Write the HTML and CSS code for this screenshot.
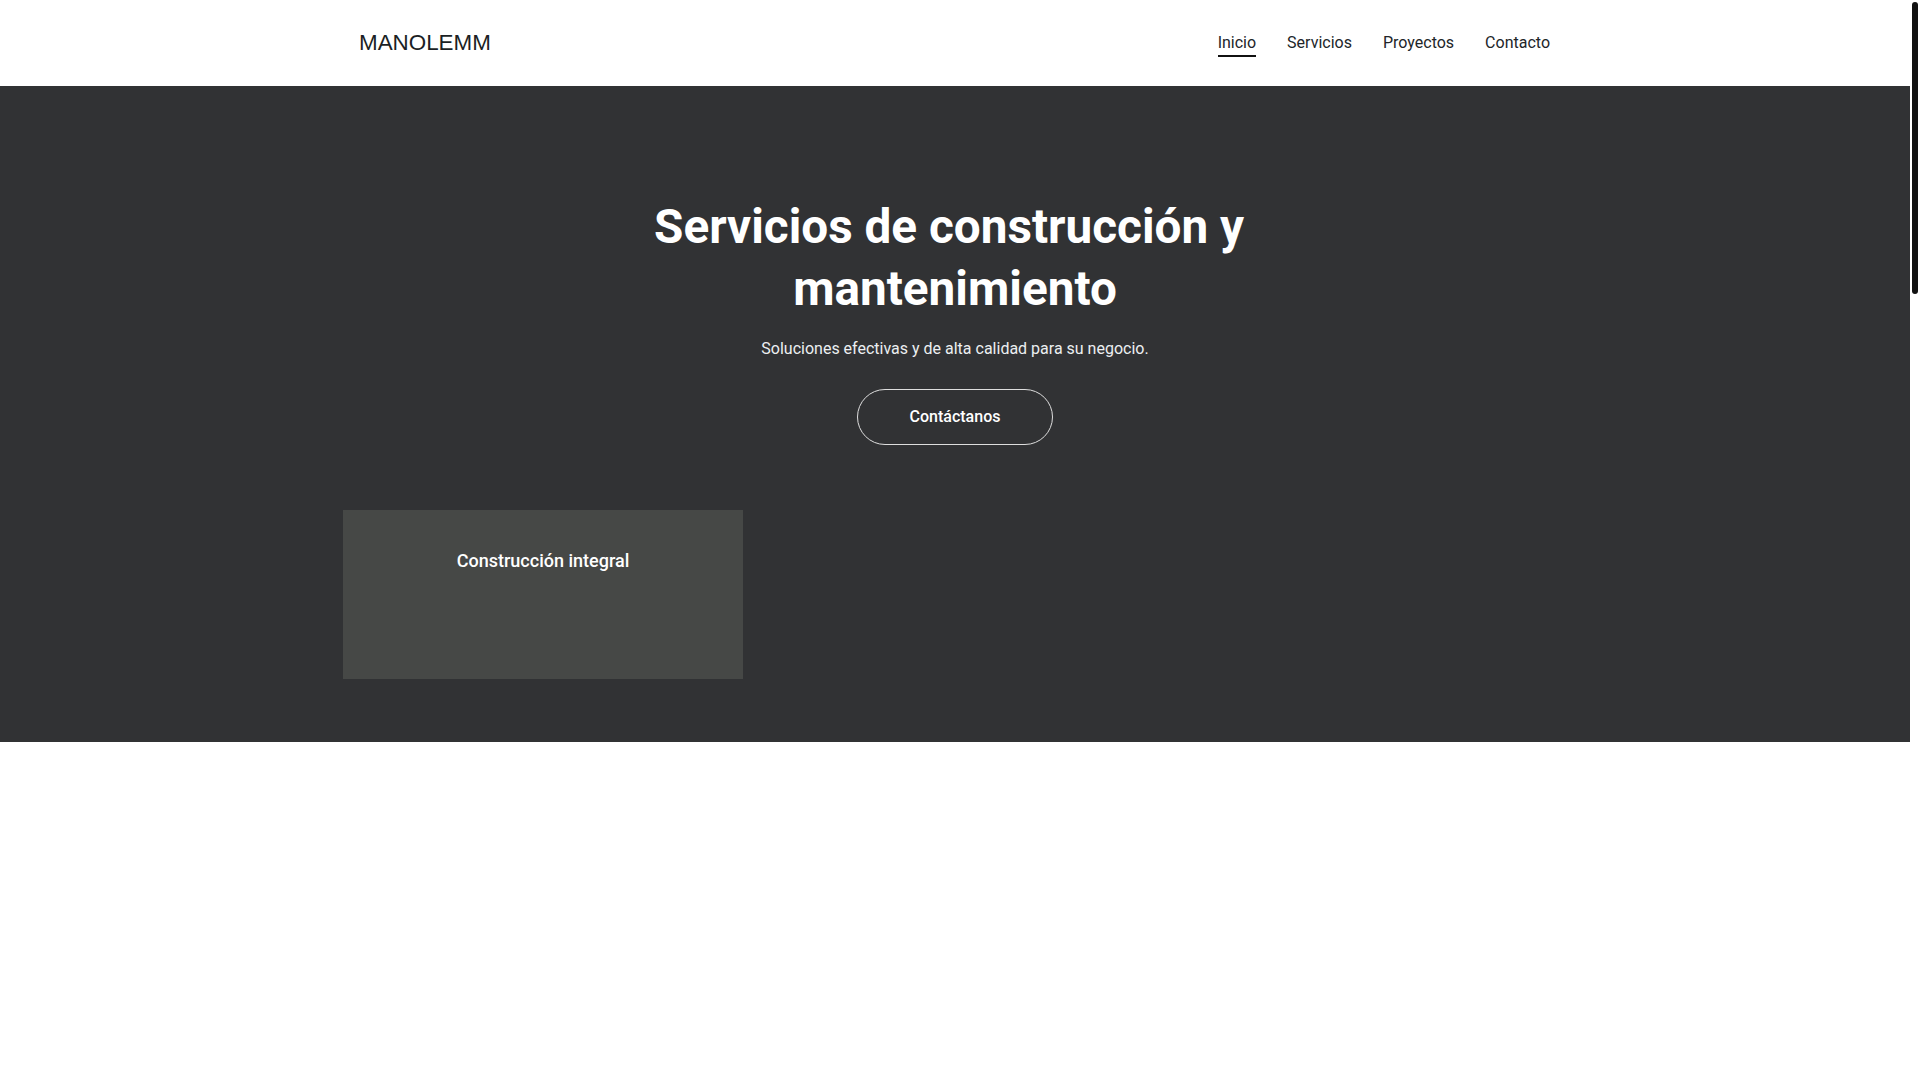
FILE: index.html
```html
<!DOCTYPE html>
<html lang="es">
<head>
<meta charset="utf-8">
<title>MANOLEMM</title>
<link rel="stylesheet" href="styles.css">
</head>
<body>
<div class="page">
  <header class="site-header">
    <div class="header-inner">
      <a class="logo" href="#">MANOLEMM</a>
      <nav class="main-nav">
        <a class="nav-link active" href="#">Inicio</a>
        <a class="nav-link" href="#servicios">Servicios</a>
        <a class="nav-link" href="#proyectos">Proyectos</a>
        <a class="nav-link" href="#contacto">Contacto</a>
      </nav>
    </div>
  </header>
  <section class="hero">
    <h1 class="hero-title">Servicios de construcción y mantenimiento</h1>
    <p class="hero-sub">Soluciones efectivas y de alta calidad para su negocio.</p>
    <a class="hero-btn" href="#contacto">Contáctanos</a>
    <div class="cards">
      <div class="card">
        <h3 class="card-title">Construcción integral</h3>
      </div>
    </div>
  </section>
  <section class="blank" id="servicios"></section>
</div>
<div class="scroll-track" aria-hidden="true"><div class="scroll-thumb"></div></div>
</body>
</html>
```

FILE: styles.css
```css
html, body {
  margin: 0;
  height: 100%;
  overflow: hidden;
}

body {
  font-family: Roboto, "Noto Sans", sans-serif;
  color: #212529;
  background: #ffffff;
}

.page {
  margin-right: 10px;
}

a { text-decoration: none; }

.site-header {
  height: 86px;
  background: #ffffff;
  display: flex;
  align-items: center;
}

.header-inner {
  width: 1190px;
  margin: 0 auto;
  display: flex;
  align-items: center;
  justify-content: space-between;
}

.logo {
  font-family: "Liberation Sans", Arial, sans-serif;
  font-size: 22.4px;
  color: #1b1f24;
  line-height: 26px;
  margin-left: -1px;
}

.main-nav {
  display: flex;
  gap: 31px;
  margin-top: 2px;
}

.nav-link {
  font-size: 16px;
  line-height: 24px;
  color: #212529;
  border-bottom: 2px solid transparent;
}

.nav-link.active {
  border-bottom-color: #111111;
}

.hero {
  background: #313234;
  color: #ffffff;
  text-align: center;
  padding: 110px 0 63px;
}

.hero-title {
  margin: 0 auto;
  max-width: 720px;
  font-size: 47.7px;
  font-weight: 700;
  line-height: 62.4px;
  white-space: break-spaces;
}

.hero-sub {
  margin: 16px 0 0;
  font-size: 16px;
  line-height: 24px;
  color: #eceff1;
}

.hero-btn {
  display: inline-block;
  margin-top: 28px;
  padding: 17px 52px;
  line-height: 20px;
  font-size: 16px;
  font-weight: 500;
  color: #ffffff;
  border: 1px solid #dedede;
  border-radius: 999px;
}

.cards {
  margin-top: 65px;
  display: grid;
  grid-template-columns: repeat(3, 400px);
  gap: 12px;
  justify-content: center;
}

.card {
  background: #464846;
  height: 169px;
  box-sizing: border-box;
  padding: 40px 24px 0;
}

.card-title {
  margin: 0;
  font-size: 18px;
  line-height: 22px;
  font-weight: 500;
  color: #ffffff;
}

.blank {
  height: 400px;
  background: #ffffff;
}

.scroll-track {
  position: fixed;
  top: 0;
  right: 0;
  width: 10px;
  height: 100%;
  background: #ffffff;
}

.scroll-thumb {
  margin: 2px 2px 0 2px;
  width: 6px;
  height: 292px;
  border-radius: 3px;
  background: #111111;
}
```
